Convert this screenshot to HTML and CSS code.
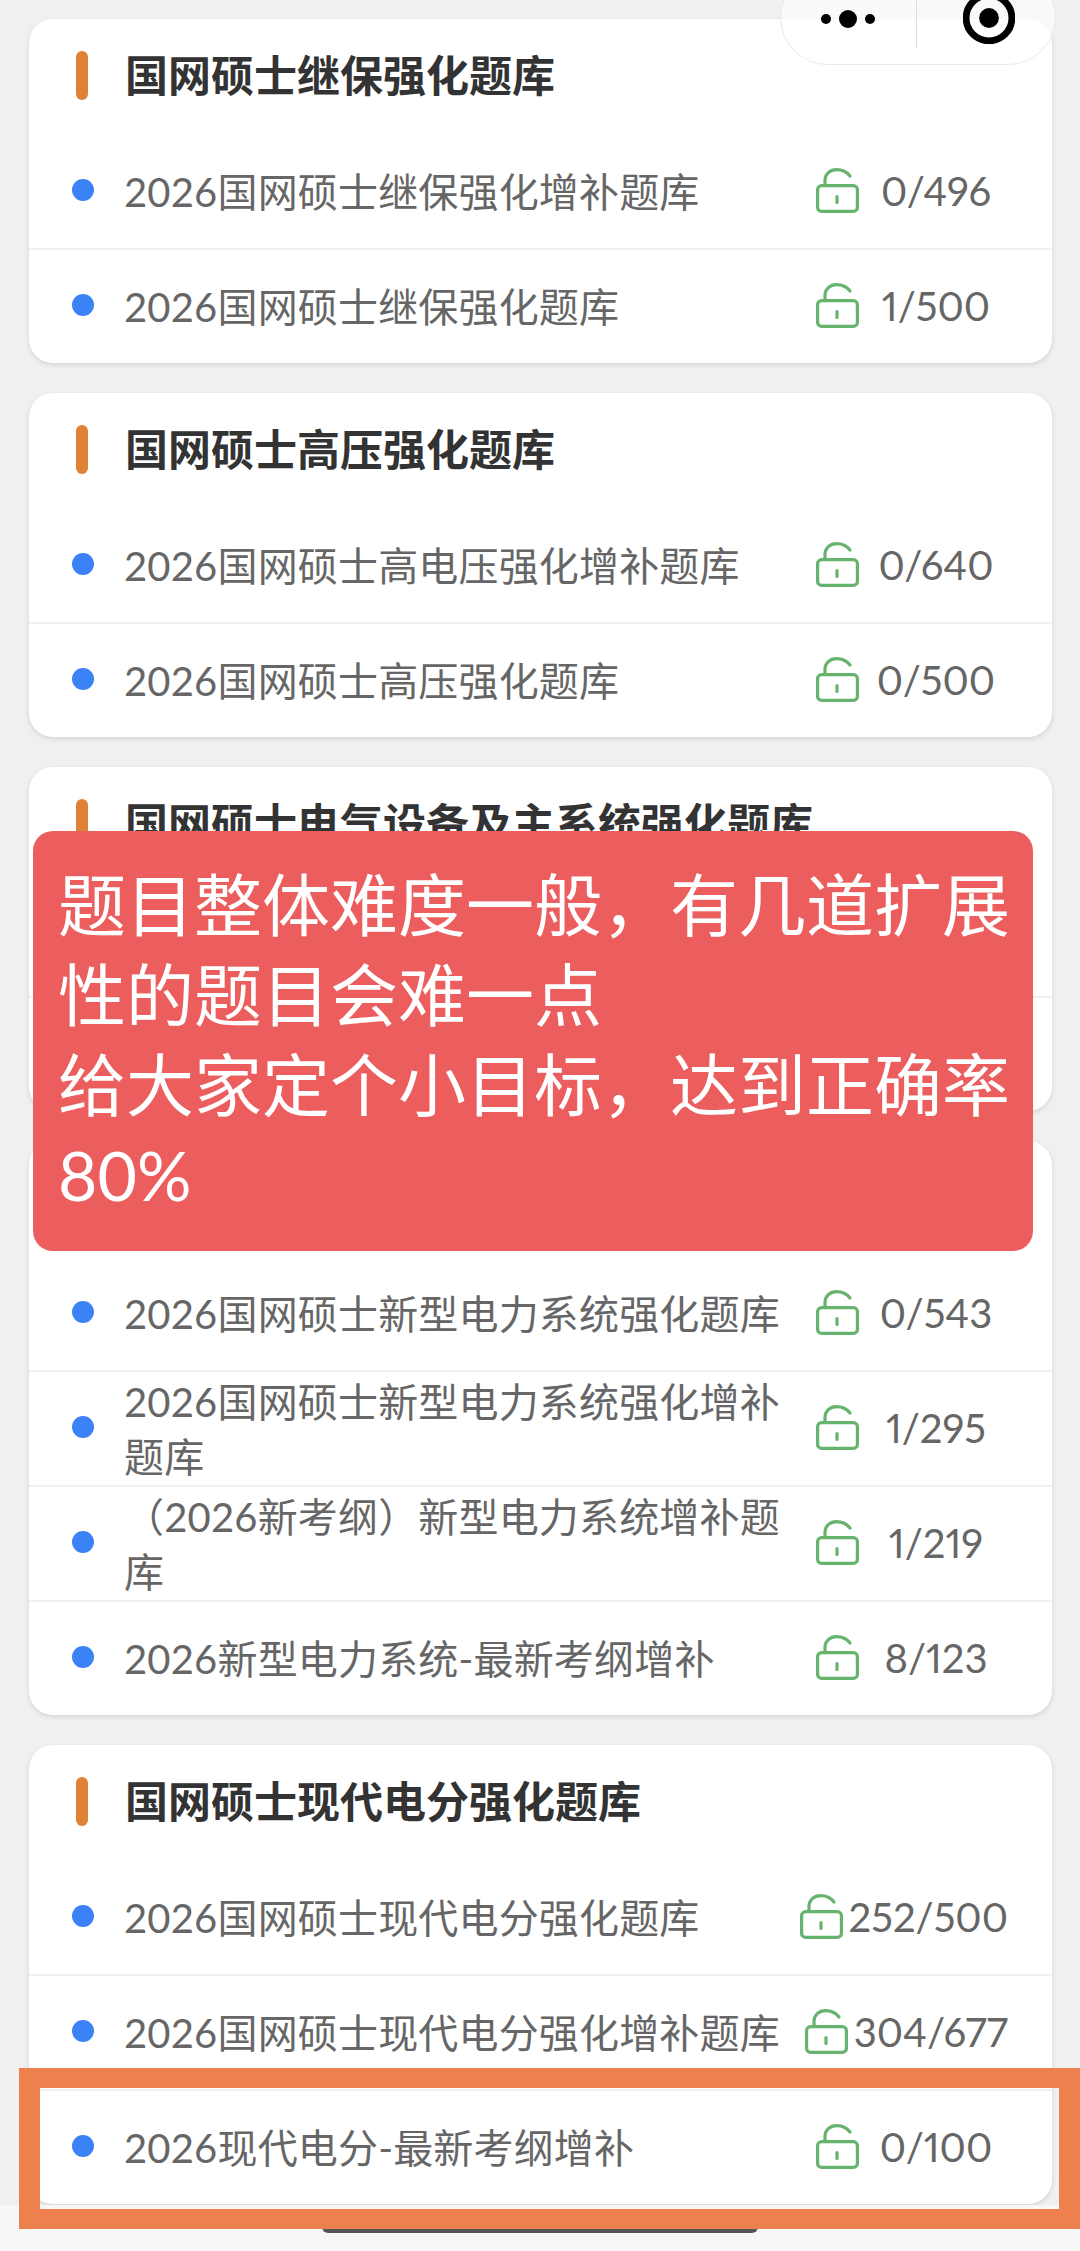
FILE: index.html
```html
<!DOCTYPE html>
<html lang="zh-CN">
<head>
<meta charset="utf-8">
<title>题库</title>
<link rel="stylesheet" href="styles.css">
</head>
<body>
<svg class="defs" width="0" height="0" aria-hidden="true">
  <symbol id="lock" viewBox="0 0 43 45">
    <rect x="1.6" y="17.6" width="39.8" height="25.8" rx="4" fill="none" stroke="currentColor" stroke-width="3.2"/>
    <path d="M9 17V12.5C9 6 14 1.6 20.5 1.6C26 1.6 31 4 34 8" fill="none" stroke="currentColor" stroke-width="3.2" stroke-linecap="round"/>
    <path d="M21 28.5V34.5" fill="none" stroke="currentColor" stroke-width="3.2" stroke-linecap="round"/>
  </symbol>
</svg>
<main class="page">
  <section class="card">
    <h2 class="card-title">国网硕士继保强化题库</h2>
    <div class="row"><i class="dot"></i><span class="name">2026国网硕士继保强化增补题库</span><span class="stat"><svg class="lock"><use href="#lock"/></svg><span class="count">0/496</span></span></div>
    <div class="row"><i class="dot"></i><span class="name">2026国网硕士继保强化题库</span><span class="stat"><svg class="lock"><use href="#lock"/></svg><span class="count">1/500</span></span></div>
  </section>
  <section class="card">
    <h2 class="card-title">国网硕士高压强化题库</h2>
    <div class="row"><i class="dot"></i><span class="name">2026国网硕士高电压强化增补题库</span><span class="stat"><svg class="lock"><use href="#lock"/></svg><span class="count">0/640</span></span></div>
    <div class="row"><i class="dot"></i><span class="name">2026国网硕士高压强化题库</span><span class="stat"><svg class="lock"><use href="#lock"/></svg><span class="count">0/500</span></span></div>
  </section>
  <section class="card">
    <h2 class="card-title">国网硕士电气设备及主系统强化题库</h2>
    <div class="row"></div>
    <div class="row"></div>
  </section>
  <section class="card">
    <h2 class="card-title"></h2>
    <div class="row"><i class="dot"></i><span class="name">2026国网硕士新型电力系统强化题库</span><span class="stat"><svg class="lock"><use href="#lock"/></svg><span class="count">0/543</span></span></div>
    <div class="row"><i class="dot"></i><span class="name">2026国网硕士新型电力系统强化增补题库</span><span class="stat"><svg class="lock"><use href="#lock"/></svg><span class="count">1/295</span></span></div>
    <div class="row"><i class="dot"></i><span class="name">（2026新考纲）新型电力系统增补题库</span><span class="stat"><svg class="lock"><use href="#lock"/></svg><span class="count">1/219</span></span></div>
    <div class="row"><i class="dot"></i><span class="name">2026新型电力系统-最新考纲增补</span><span class="stat"><svg class="lock"><use href="#lock"/></svg><span class="count">8/123</span></span></div>
  </section>
  <section class="card">
    <h2 class="card-title">国网硕士现代电分强化题库</h2>
    <div class="row"><i class="dot"></i><span class="name">2026国网硕士现代电分强化题库</span><span class="stat wide"><svg class="lock"><use href="#lock"/></svg><span class="count">252/500</span></span></div>
    <div class="row"><i class="dot"></i><span class="name">2026国网硕士现代电分强化增补题库</span><span class="stat wide"><svg class="lock"><use href="#lock"/></svg><span class="count">304/677</span></span></div>
    <div class="row"><i class="dot"></i><span class="name">2026现代电分-最新考纲增补</span><span class="stat"><svg class="lock"><use href="#lock"/></svg><span class="count">0/100</span></span></div>
  </section>
</main>

<div class="capsule">
  <span class="more"><i></i><i></i><i></i></span>
  <span class="sep"></span>
  <svg class="target" viewBox="0 0 50 50"><circle cx="25" cy="25" r="22" fill="none" stroke="#000" stroke-width="6.5"/><circle cx="25" cy="25" r="9.5" fill="#000"/></svg>
</div>

<p class="note">题目整体难度一般，有几道扩展性的题目会难一点<br>给大家定个小目标，达到正确率80%</p>

<div class="home-strip"><span class="home-bar"></span></div>
<div class="highlight"></div>
</body>
</html>
```
FILE: styles.css
```css
* { box-sizing: border-box; }
html, body { margin: 0; padding: 0; }
body {
  position: relative;
  width: 1080px;
  height: 2251px;
  overflow: hidden;
  background: #f0f0f0;
  font-family: "Lato", "Noto Sans CJK SC", sans-serif;
}
.defs { position: absolute; }
.page {
  display: flex;
  flex-direction: column;
  gap: 30px;
  padding: 19px 28px 0 29px;
}
.card {
  background: #fff;
  border-radius: 24px;
  box-shadow: 0 2px 5px rgba(0, 0, 0, .12);
  overflow: hidden;
}
.card-title {
  position: relative;
  display: flex;
  align-items: center;
  height: 114px;
  margin: 0;
  padding: 0 0 0 96px;
  color: #333;
  font-size: 43px;
  font-weight: 700;
  line-height: 56px;
}
.card-title::before {
  content: "";
  position: absolute;
  left: 47px;
  top: 32px;
  width: 12px;
  height: 49px;
  border-radius: 6px;
  background: #e08236;
}
.row {
  display: flex;
  align-items: center;
  height: 115px;
  padding: 0 41px 0 43px;
  border-top: 2px solid #f1f1f1;
  color: #666;
  font-size: 40px;
  line-height: 55px;
}
.row:first-of-type { border-top-color: transparent; }
.dot {
  flex: none;
  width: 22px;
  height: 22px;
  margin: -4px 30px 0 0;
  border-radius: 50%;
  background: #3b82f6;
}
.name {
  flex: 1;
  min-width: 0;
  padding: 2px 20px 0 0;
  letter-spacing: .17px;
}
.stat {
  display: flex;
  flex: none;
  align-items: center;
  justify-content: flex-end;
}
.lock {
  flex: none;
  width: 43px;
  height: 45px;
  margin: -3px 2px 0 0;
  color: #66b36e;
}
.count {
  min-width: 150px;
  font-variant-numeric: proportional-nums;
  text-align: center;
}
.wide { margin-left: -24px; padding-right: 3px; }
.wide .lock { margin-right: 6px; }
.wide .count { min-width: 0; }

.capsule {
  position: absolute;
  top: -30px;
  left: 780px;
  display: flex;
  align-items: center;
  width: 276px;
  height: 95px;
  border: 1px solid #e9e9e9;
  border-radius: 48px;
  background: rgba(255, 255, 255, .62);
}
.more {
  display: flex;
  align-items: center;
  gap: 8px;
  margin: 0 0 -3px 40px;
}
.more i { width: 10px; height: 10px; border-radius: 50%; background: #000; }
.more i:nth-child(2) { width: 18px; height: 18px; }
.sep {
  width: 1px;
  height: 47px;
  margin: 30px 0 0 41px;
  align-self: flex-start;
  background: #ddd;
}
.target { width: 52px; height: 52px; margin: 0 0 -1px 46px; }

.note {
  position: absolute;
  top: 831px;
  left: 33px;
  width: 1000px;
  height: 420px;
  margin: 0;
  padding: 29px 10px 29px 25px;
  border-radius: 20px;
  background: #ec5e5e;
  color: #fff;
  font-size: 68px;
  line-height: 90px;
}
.home-strip {
  position: absolute;
  left: 0;
  right: 0;
  bottom: 0;
  height: 46px;
  background: #f7f7f7;
}
.home-bar {
  position: absolute;
  left: 322px;
  top: 16px;
  width: 436px;
  height: 12px;
  border-radius: 6px;
  background: #555;
}
.highlight {
  position: absolute;
  top: 2068px;
  left: 19px;
  width: 1061px;
  height: 161px;
  border: solid #ee8050;
  border-width: 20px 21px;
}
```
